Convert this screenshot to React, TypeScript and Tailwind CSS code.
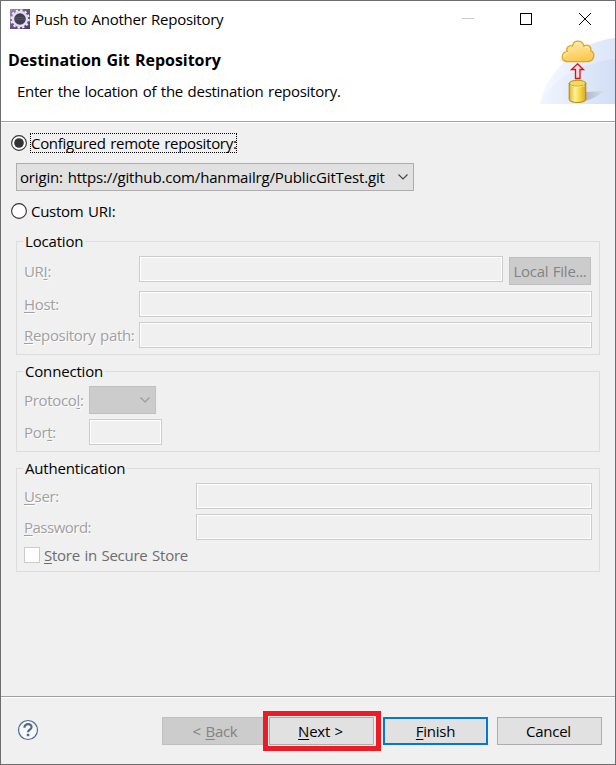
import React from "react";

type Kids = { children?: React.ReactNode; className?: string };

/** Underlined keyboard mnemonic. */
const U = ({ children }: Kids) => (
  <span className="underline decoration-1 underline-offset-[2px]">{children}</span>
);

const Radio = ({ checked = false }: { checked?: boolean }) => (
  <svg width="16" height="16" viewBox="0 0 16 16" className="shrink-0">
    <circle cx="8" cy="8" r="7.4" fill="#fff" stroke="#333" strokeWidth="1.1" />
    {checked && <circle cx="8" cy="8" r="4.8" fill="#333" />}
  </svg>
);

const Chevron = ({ color }: { color: string }) => (
  <svg width="10" height="6" viewBox="0 0 10 6" className="shrink-0" fill="none" stroke={color} strokeWidth="1.1">
    <path d="M0.5 0.5 L5 5 L9.5 0.5" />
  </svg>
);

const Field = ({ className = "" }: Kids) => (
  <div className={"h-[26px] shrink-0 border border-[#cccccc] bg-[#f0f0f0] shadow-[inset_0_0_0_1px_#ffffff] " + className} />
);

const Label = ({ children, className = "" }: Kids) => (
  <div className={"shrink-0 tracking-[-0.33px] whitespace-nowrap text-[#a0a0a0] [text-shadow:1px_1px_0_#ffffff] " + className}>{children}</div>
);

const Group = ({ title, children, className = "" }: Kids & { title: React.ReactNode }) => (
  <section className={"ml-[15px] w-[584px] border border-[#dcdcdc] pl-[7px] " + className}>
    <div className="-mt-[11px] -ml-[1px] flex h-[20px]">
      <span className="bg-[#f0f0f0] pr-[2px] pl-[2px] leading-[20px] tracking-[-0.18px] whitespace-nowrap">{title}</span>
    </div>
    {children}
  </section>
);

const Button = ({ children, className = "" }: Kids) => (
  <div className={"flex h-[28px] w-[105px] shrink-0 items-center justify-center whitespace-nowrap " + className}>
    {children}
  </div>
);

const EclipseIcon = () => (
  <svg width="20" height="20" viewBox="0 0 20 20" className="shrink-0">
    <defs>
      <linearGradient id="app" x1="0" y1="0" x2="1" y2="1">
        <stop offset="0" stopColor="#a58fb5" />
        <stop offset="0.5" stopColor="#65508a" />
        <stop offset="1" stopColor="#4b3b72" />
      </linearGradient>
    </defs>
    <rect width="20" height="20" fill="url(#app)" />
    <circle cx="10" cy="10" r="8.8" fill="none" stroke="#eeeaf0" strokeWidth="2" strokeDasharray="2.4 2.2" />
    <circle cx="10" cy="10" r="7" fill="#403d55" stroke="#e4e0e8" strokeWidth="2.4" />
    <path d="M5.5 8.5h9M5 10.5h10" stroke="#5c5280" strokeWidth="0.8" />
  </svg>
);

const PushBanner = () => (
  <svg width="75" height="66" viewBox="0 0 75 66" className="shrink-0">
    <defs>
      <linearGradient id="outer" x1="0" y1="0" x2="1" y2="0">
        <stop offset="0" stopColor="#f5f8fe" />
        <stop offset="1" stopColor="#dce6f8" />
      </linearGradient>
      <linearGradient id="inner" x1="0" y1="0" x2="1" y2="0">
        <stop offset="0" stopColor="#f1f5fd" />
        <stop offset="1" stopColor="#d2def5" />
      </linearGradient>
      <linearGradient id="cloud" x1="0" y1="0" x2="0.3" y2="1">
        <stop offset="0" stopColor="#fff0b8" />
        <stop offset="1" stopColor="#fcc94f" />
      </linearGradient>
      <linearGradient id="can" x1="0" y1="0" x2="1" y2="0">
        <stop offset="0" stopColor="#dfb42e" />
        <stop offset="0.35" stopColor="#fff590" />
        <stop offset="0.7" stopColor="#f2cf3e" />
        <stop offset="1" stopColor="#d9a51d" />
      </linearGradient>
      <linearGradient id="shade" x1="0" y1="0" x2="1" y2="0">
        <stop offset="0" stopColor="#b2b8c5" />
        <stop offset="1" stopColor="#d5def0" />
      </linearGradient>
    </defs>
    <path d="M0 66C3 40 36 3 75 0V66Z" fill="url(#outer)" />
    <path d="M0 66C10 40 45 24 75 21V66Z" fill="url(#inner)" />
    <g transform="translate(0.5 0)">
      <path d="M45 54L64 53C57 58 52 61 45 63Z" fill="url(#shade)" />
      <path d="M26.5 23.7C20 23 20.2 14.5 26.8 13.7C25 10 28.5 6.7 32 8C33 1.5 42 1.3 43.5 8.2C47.5 5.5 51.5 9 50 12.8C55 14 54.5 23 47.5 23.5Z" fill="url(#cloud)" stroke="#e3a31d" strokeWidth="1.3" />
      <path d="M44 9.5C47 8 49.5 10 48.4 13M27.5 14.5C24 15 23 17 23.5 19" fill="none" stroke="#fff6d2" strokeWidth="1" />
      <path d="M37 25.8L43 31.5H39.5V40.5H35V31.5H31Z" fill="#f7d9d6" stroke="#d0151b" strokeWidth="1.3" />
      <path d="M28.7 45V61.5C29 65.5 45 65.5 45.3 61.5V45Z" fill="url(#can)" stroke="#b1811c" strokeWidth="1" />
      <ellipse cx="37" cy="45.3" rx="8.3" ry="3" fill="#f4db55" stroke="#b9891e" strokeWidth="1" />
      <path d="M30 47.5C33 49.4 41 49.4 44 47.5" fill="none" stroke="#fff7ac" strokeWidth="0.8" />
    </g>
  </svg>
);

export default function App() {
  return (
    <div className="flex h-[765px] w-[616px] flex-col overflow-hidden border border-[#6d6d70] bg-[#f0f0f0] font-['Open_Sans','Noto_Sans_CJK_KR',sans-serif] text-[15px] leading-[20px] tracking-[-0.27px] text-black [word-spacing:1px]">
      <header className="flex h-[121px] shrink-0 flex-col border-b border-[#a0a0a0] bg-white">
        <div className="flex h-[36px] items-center">
          <div className="ml-[9px]"><EclipseIcon /></div>
          <span className="ml-[5px] w-[400px] whitespace-nowrap">Push to Another Repository</span>
          <svg width="140" height="14" viewBox="0 0 140 14" className="ml-[25px] shrink-0" fill="none" shapeRendering="crispEdges">
            <path d="M2 6.5H14" stroke="#cccccc" />
            <rect x="60.5" y="1.5" width="11" height="11" stroke="#000" />
            <path d="M119 1L131 13M131 1L119 13" stroke="#000" shapeRendering="auto" />
          </svg>
        </div>
        <div className="flex pt-[1px]">
          <div className="w-[539px] pt-[12px]">
            <h1 className="pl-[7px] text-[16px] font-bold tracking-[-0.02px] whitespace-nowrap">Destination Git Repository</h1>
            <p className="mt-[11px] pl-[16px] whitespace-nowrap">Enter the location of the destination repository.</p>
          </div>
          <div className="ml-[1px]"><PushBanner /></div>
        </div>
      </header>
      <main className="flex h-[574px] shrink-0 flex-col border-t border-white">
        <div className="mt-[10px] ml-[10px] flex h-[20px] items-center">
          <Radio checked />
          <div className="ml-[3px] flex h-[20px] w-[207px] items-center border border-dotted border-black tracking-[-0.3px] whitespace-nowrap">Configured remote repository:</div>
        </div>
        <div className="mt-[10px] ml-[15px] flex h-[28px] w-[398px] items-center justify-between border border-[#adadad] bg-[#e1e1e1] pr-[5px] pl-[3px] tracking-[-0.16px] whitespace-nowrap">
          <span>origin: https://github.com/hanmailrg/PublicGitTest.git</span>
          <Chevron color="#444" />
        </div>
        <div className="mt-[10px] ml-[10px] flex h-[20px] items-center">
          <Radio />
          <span className="ml-[4px]">Custom URI:</span>
        </div>
        <Group title="Location" className="mt-[20px] h-[114px]">
          <div className="mt-[5px] flex h-[29px]">
            <Label className="w-[115px] pt-[5px]">UR<U>I</U>:</Label>
            <Field className="w-[364px]" />
            <Button className="mt-[1px] ml-[6px] w-[82px]! border border-[#bfbfbf] bg-[#cccccc] text-[#838383]">Local File...</Button>
          </div>
          <div className="mt-[6px] flex h-[26px]">
            <Label className="w-[115px] pt-[3px]"><U>H</U>ost:</Label>
            <Field className="w-[453px]" />
          </div>
          <div className="mt-[5px] flex h-[26px]">
            <Label className="w-[115px] pt-[3px]"><U>R</U>epository path:</Label>
            <Field className="w-[453px]" />
          </div>
        </Group>
        <Group title="Connection" className="mt-[16px] h-[81px]">
          <div className="mt-[5px] flex h-[28px]">
            <Label className="w-[65px] pt-[4px]">Protoco<U>l</U>:</Label>
            <div className="flex w-[67px] items-center justify-end border border-[#bfbfbf] bg-[#cccccc] pr-[5px]"><Chevron color="#999" /></div>
          </div>
          <div className="mt-[5px] flex h-[26px]">
            <Label className="w-[65px] pt-[3px]">Por<U>t</U>:</Label>
            <Field className="w-[73px]" />
          </div>
        </Group>
        <Group title="Authentication" className="mt-[16px] h-[104px]">
          <div className="mt-[5px] flex h-[26px]">
            <Label className="w-[172px] pt-[3px]"><U>U</U>ser:</Label>
            <Field className="w-[396px]" />
          </div>
          <div className="mt-[5px] flex h-[26px]">
            <Label className="w-[172px] pt-[3px] tracking-[-0.5px]!"><U>P</U>assword:</Label>
            <Field className="w-[396px]" />
          </div>
          <div className="mt-[5px] flex h-[20px] items-center text-[#6d6d6d]">
            <div className="size-[16px] border border-[#cccccc] bg-white" />
            <span className="ml-[4px]"><U>S</U>tore in Secure Store</span>
          </div>
        </Group>
      </main>
      <footer className="flex h-[67px] shrink-0 border-t border-[#a0a0a0] shadow-[inset_0_1px_0_#ffffff]">
        <svg width="22" height="22" viewBox="0 0 22 22" className="mt-[22px] ml-[16px] shrink-0" fill="none">
          <circle cx="11" cy="11" r="9.5" fill="#f7f8fb" stroke="#52698c" strokeWidth="1.2" />
          <path d="M7.4 8.8C7.2 3.9 15 4 14.5 8.3C14.2 10.6 11 10.7 11 13.3" stroke="#52698c" strokeWidth="2.2" />
          <rect x="9.8" y="14.8" width="2.5" height="2.4" fill="#52698c" />
        </svg>
        <Button className="mt-[20px] ml-[123px] w-[101px]! border border-r-0 border-[#bfbfbf] bg-[#cccccc] pl-[4px] text-[#838383]"><span>&lt; <U>B</U>ack</span></Button>
        <div className="mt-[14px] h-[40px] w-[118px] border-[5px] border-[#ed1c24] pt-[1px] pl-[1px]">
          <Button className="border border-[#adadad] bg-[#e1e1e1] pr-[2px]"><span><U>N</U>ext &gt;</span></Button>
        </div>
        <Button className="mt-[20px] ml-[2px] border-2 border-[#0078d7] bg-[#e1e1e1]"><span><U>F</U>inish</span></Button>
        <Button className="mt-[20px] ml-[9px] border border-[#adadad] bg-[#e1e1e1] pr-[2px]">Cancel</Button>
      </footer>
    </div>
  );
}
